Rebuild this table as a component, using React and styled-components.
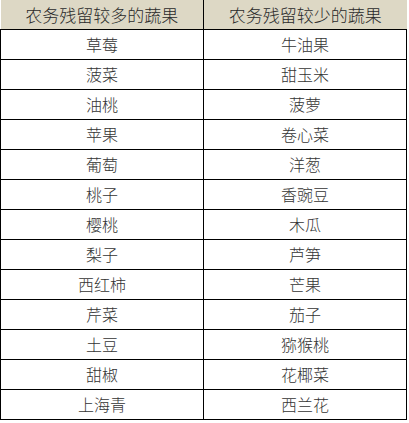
import styled, { createGlobalStyle } from "styled-components";

const GlobalStyle = createGlobalStyle`
    body {
        margin: 0;
        background: #ffffff;
        font-family: "Noto Sans CJK SC", "Noto Sans", sans-serif;
    }
    `;

const StyledTable = styled.table`
    width: 407px;
    border-collapse: collapse;
    table-layout: fixed;
    `;

const StyledHeadCell = styled.th`
    height: 29px;
    padding: 0;
    background: #ddd8c5;
    border-left: 1px solid #000;
    border-bottom: 1px solid #000;
    color: #2a2a2a;
    font-size: 17px;
    font-weight: 300;
    text-align: center;
    line-height: 29px;

    &:first-child {
        border-left: none;
    }
    `;

const StyledCell = styled.td`
    height: 29px;
    padding: 0;
    border: 1px solid #000;
    border-top: none;
    color: #333;
    font-size: 16px;
    font-weight: 300;
    text-align: center;
    line-height: 29px;
    `;

const rows = [
    ["草莓", "牛油果"],
    ["菠菜", "甜玉米"],
    ["油桃", "菠萝"],
    ["苹果", "卷心菜"],
    ["葡萄", "洋葱"],
    ["桃子", "香豌豆"],
    ["樱桃", "木瓜"],
    ["梨子", "芦笋"],
    ["西红柿", "芒果"],
    ["芹菜", "茄子"],
    ["土豆", "猕猴桃"],
    ["甜椒", "花椰菜"],
    ["上海青", "西兰花"],
];

function App() {
    return (
        <>
            <GlobalStyle />
            <StyledTable>
                <thead>
                    <tr>
                        <StyledHeadCell>农务残留较多的蔬果</StyledHeadCell>
                        <StyledHeadCell>农务残留较少的蔬果</StyledHeadCell>
                    </tr>
                </thead>
                <tbody>
                    {rows.map(([more, less]) => (
                        <tr key={more}>
                            <StyledCell>{more}</StyledCell>
                            <StyledCell>{less}</StyledCell>
                        </tr>
                    ))}
                </tbody>
            </StyledTable>
        </>
    );
}

export default App;
